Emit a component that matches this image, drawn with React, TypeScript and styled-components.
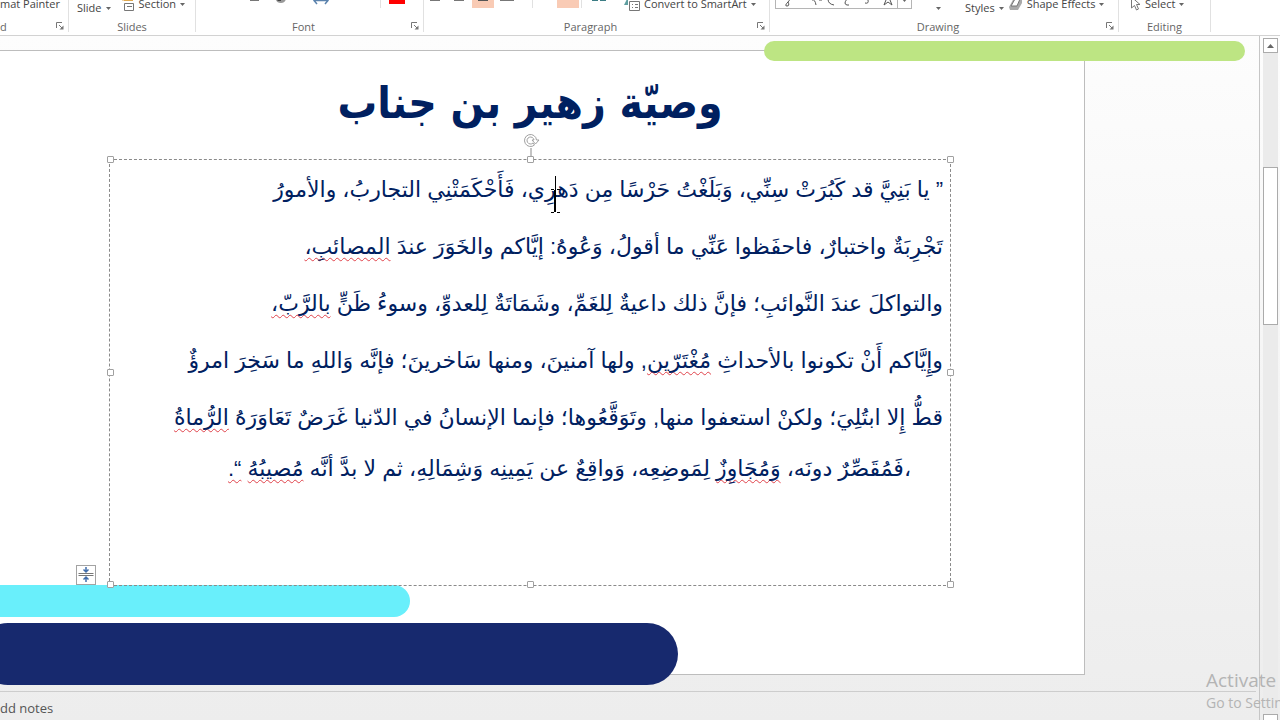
import React from "react";
import styled, { createGlobalStyle } from "styled-components";

const GlobalStyle = createGlobalStyle`
  * { box-sizing: border-box; }
  body {
    margin: 0;
    background: #ededed;
    color: #444;
    font-family: "Open Sans", "Noto Sans", sans-serif;
    font-size: 11px;
  }
`;

const Window = styled.div`
  display: flex;
  flex-direction: column;
  height: 100vh;
  min-width: 0;
  overflow: hidden;
  position: relative;
`;

const Ribbon = styled.header`
  display: flex;
  flex: none;
  height: 36px;
  background: #fff;
  border-bottom: 1px solid #d2d2d2;
  overflow: hidden;
`;

const Group = styled.section<{ $width: number }>`
  display: flex;
  flex-direction: column;
  flex: none;
  justify-content: flex-end;
  width: ${(p) => p.$width}px;
  border-right: 1px solid #e1e1e1;
  margin-bottom: 3px;
`;

const Tools = styled.div<{ $start?: number; $gap?: number }>`
  display: flex;
  align-items: flex-end;
  gap: ${(p) => p.$gap ?? 0}px;
  height: 32px;
  margin-bottom: 4px;
  padding-left: ${(p) => p.$start ?? 0}px;
`;

const GroupFooter = styled.div`
  display: flex;
  align-items: center;
  height: 12px;
  color: #666;
`;

const GroupName = styled.span<{ $align?: string }>`
  flex: 1;
  text-align: ${(p) => p.$align ?? "center"};
`;

const ToolButton = styled.button<{ $raised?: boolean; $width?: number }>`
  display: flex;
  align-items: center;
  justify-content: center;
  gap: 4px;
  width: ${(p) => (p.$width ? `${p.$width}px` : "auto")};
  height: 16px;
  margin: 0 0 ${(p) => (p.$raised ? 4 : 0)}px;
  padding: 0;
  border: 0;
  background: none;
  color: #444;
  font: inherit;
  line-height: 16px;
  white-space: nowrap;
`;

const IconButton = styled.button<{ $active?: boolean; $width: number }>`
  display: flex;
  align-items: flex-end;
  justify-content: center;
  width: ${(p) => p.$width}px;
  height: 22px;
  margin: 0 0 8px;
  padding: 0;
  border: 0;
  background: ${(p) => (p.$active ? "#f9cbb5" : "none")};
`;

const Rule = styled.span`
  width: 1px;
  height: 22px;
  margin-bottom: 8px;
  background: #e1e1e1;
`;

const Swatch = styled.span`
  width: 16px;
  height: 5px;
  margin-bottom: 4px;
  background: #f00;
`;

const Gallery = styled.div`
  display: flex;
  align-items: flex-end;
  width: 137px;
  height: 24px;
  margin-bottom: 7px;
  border: 1px solid #b5b5b5;
`;

const Body = styled.div`
  display: flex;
  flex: 1;
  min-height: 0;
  background: linear-gradient(#fdfdfd, #f6f6f6 45%, #efefef 85%, #ededed);
`;

const Main = styled.main`
  display: flex;
  flex-direction: column;
  flex: 1;
  min-width: 0;
  border-right: 1px solid #c6c6c6;
`;

const Workspace = styled.div`
  position: relative;
  flex: 1;
  padding: 14px 174px 16px 0;
`;

const Slide = styled.article`
  height: 100%;
  padding: 14px 133px 0 109px;
  background: #fff;
  border: solid #bdbdbd;
  border-width: 1px 1px 1px 0;
`;

const Pill = styled.span<{ $color: string }>`
  position: absolute;
  background: ${(p) => p.$color};
`;

const GreenPill = styled(Pill)`
  top: 5px;
  right: 14px;
  width: 481px;
  height: 20px;
  border-radius: 10px;
`;

const CyanPill = styled(Pill)`
  left: 0;
  bottom: 74px;
  width: 410px;
  height: 32px;
  border-radius: 0 16px 16px 0;
`;

const NavyPill = styled(Pill)`
  left: -23px;
  bottom: 6px;
  width: 701px;
  height: 62px;
  border-radius: 31px;
`;

const Title = styled.h1`
  margin: 0;
  height: 94px;
  color: #002060;
  font-family: "DejaVu Sans Condensed", "DejaVu Sans", sans-serif;
  font-size: 44px;
  font-weight: 700;
  line-height: 76px;
  text-align: center;
  white-space: nowrap;
`;

const TextBox = styled.div`
  position: relative;
  height: 427px;
  padding: 1px 7px 0;
  border: 1px dashed #8a8a8a;
  color: #002060;
  font-family: "Liberation Sans", "DejaVu Sans", sans-serif;
  font-size: 22px;
`;

const Line = styled.p<{ $last?: boolean }>`
  margin: 0;
  padding-right: ${(p) => (p.$last ? 32 : 0)}px;
  line-height: ${(p) => (p.$last ? 45 : 57)}px;
  white-space: nowrap;
`;

const Misspelt = styled.span`
  text-decoration: underline wavy #e0434b 1px;
  text-decoration-skip-ink: none;
  text-underline-offset: 3px;
`;

const Handle = styled.span<{ $x: number; $y: number }>`
  position: absolute;
  left: ${(p) => p.$x}%;
  top: ${(p) => p.$y}%;
  width: 7px;
  height: 7px;
  margin: -4px -3px;
  background: #fff;
  border: 1px solid #a0a0a0;
  border-radius: 1px;
`;

const Rotate = styled.svg`
  position: absolute;
  left: 50%;
  top: -28px;
  margin-left: -8px;
`;

const Pointer = styled.svg`
  position: absolute;
  left: 440px;
  top: 15px;
`;

const FitButton = styled.button`
  position: absolute;
  left: -34px;
  bottom: 0;
  width: 20px;
  height: 20px;
  padding: 0;
  background: #fff;
  border: 1px solid #a3a3a3;
`;

const Notes = styled.footer`
  flex: none;
  height: 29px;
  margin-right: 3px;
  padding-top: 6px;
  border-top: 1px solid #cdcdcd;
  color: #555;
  font-size: 13px;
  line-height: 20px;
`;

const ScrollBar = styled.aside`
  display: flex;
  flex-direction: column;
  width: 15px;
  margin: 2px 2px 0 3px;
  background: #ebebeb;
`;

const ScrollButton = styled.button`
  display: flex;
  align-items: center;
  justify-content: center;
  flex: none;
  height: 15px;
  padding: 0;
  background: #fff;
  border: 1px solid #ababab;
`;

const Track = styled.div`
  flex: 1;
  padding-top: 114px;
`;

const Thumb = styled.div`
  height: 158px;
  background: #fff;
  border: 1px solid #ababab;
`;

const ScrollEnd = styled.div`
  height: 6px;
  background: #fff;
  border: 1px solid #ababab;
  border-bottom: 0;
`;

const Watermark = styled.div`
  position: absolute;
  left: calc(100% - 74px);
  bottom: 7px;
  color: #b4b4b4;
  font-size: 14px;
  line-height: 20px;
  white-space: nowrap;
`;

const WatermarkTitle = styled.div`
  font-size: 19px;
  line-height: 26px;
`;

const LauncherIcon = styled.svg`
  margin-right: 4px;
`;

const Arrow = () => (
  <svg width="5" height="3" viewBox="0 0 5 3"><path d="M0 0h5L2.5 3z" fill="#666" /></svg>
);

const Launcher = () => (
  <LauncherIcon width="8" height="8" viewBox="0 0 8 8" fill="none" stroke="#777">
    <path d="M.5 6V.5H6M3 3l3 3" /><path d="M7.500 3.500v4h-4z" fill="#777" stroke="none" />
  </LauncherIcon>
);

const Dash = ({ width, color = "#777" }: { width: number; color?: string }) => (
  <svg width={width} height="22" viewBox={`0 0 ${width} 22`}>
    <path d={`M0 14.500h${width}`} stroke={color} />
  </svg>
);

function RibbonGroup(props: { name: string; align?: string; width: number; start?: number; gap?: number; launcher?: boolean; children: React.ReactNode }) {
  return (
    <Group $width={props.width}>
      <Tools $start={props.start} $gap={props.gap}>{props.children}</Tools>
      <GroupFooter>
        <GroupName $align={props.align}>{props.name}</GroupName>
        {props.launcher && <Launcher />}
      </GroupFooter>
    </Group>
  );
}

const handles = [[0, 0], [50, 0], [100, 0], [0, 50], [100, 50], [0, 100], [50, 100], [100, 100]];

export default function App() {
  return (
    <Window>
      <GlobalStyle />
      <Ribbon>
        <RibbonGroup name="d" align="left" width={69} launcher>
          <ToolButton $raised>mat Painter</ToolButton>
        </RibbonGroup>
        <RibbonGroup name="Slides" width={127} start={8} gap={8}>
          <ToolButton>Slide <Arrow /></ToolButton>
          <ToolButton $raised>
            <svg width="16" height="16" viewBox="0 0 16 16" fill="none">
              <path d="M1 3h4M4 0v5M5 4.500h9" stroke="#e0a84e" />
              <path d="M5.500 7.500h9v7h-9zM8 10.500h5" stroke="#777" />
            </svg>
            Section <Arrow />
          </ToolButton>
        </RibbonGroup>
        <RibbonGroup name="Font" width={228} start={47} gap={8} launcher>
          <IconButton $width={23} aria-label="Underline"><Dash width={9} /></IconButton>
          <IconButton $width={12} aria-label="Text shadow">
            <svg width="12" height="22" viewBox="0 0 12 22"><path d="M2 14h6q3 0 3-3l1 2q-1 4-5 4-4 0-5-3z" fill="#999" /><path d="M2 13h5v2H4z" fill="#444" /></svg>
          </IconButton>
          <IconButton $width={53} aria-label="Character spacing">
            <svg width="18" height="22" viewBox="0 0 18 22" fill="none" stroke="#5b83ad" strokeWidth="1.500"><path d="M2 14.500h14M5 11l-3 3.500L5 18M13 11l3 3.500L13 18" /></svg>
          </IconButton>
          <IconButton $width={17} aria-label="Change case" />
          <Rule />
          <IconButton $width={16} aria-label="Font color"><Swatch /></IconButton>
        </RibbonGroup>
        <RibbonGroup name="Paragraph" width={346} gap={2} launcher>
          <IconButton $width={22} aria-label="Align left"><Dash width={10} /></IconButton>
          <IconButton $width={22} aria-label="Center"><Dash width={10} /></IconButton>
          <IconButton $width={22} aria-label="Align right" $active><Dash width={10} color="#555" /></IconButton>
          <IconButton $width={22} aria-label="Justify"><Dash width={14} /></IconButton>
          <IconButton $width={10} aria-label="Distribute" />
          <Rule />
          <IconButton $width={20} aria-label="Left to right" />
          <IconButton $width={22} aria-label="Right to left" $active />
          <Rule />
          <IconButton $width={30} aria-label="Columns">
            <svg width="14" height="22" viewBox="0 0 14 22"><path d="M0 14h6M8 14h6" stroke="#3c7d85" strokeWidth="2" /></svg>
          </IconButton>
          <IconButton $width={6} aria-label="Column options" />
          <ToolButton $raised>
            <svg width="16" height="16" viewBox="0 0 16 16" fill="none">
              <path d="M4 1v8H0z" fill="#5f9ea0" />
              <path d="M5.500 5.500h10v9h-10zM8 8.500h1M11 8.500h3M8 11.500h1M11 11.500h3" stroke="#777" />
            </svg>
            Convert to SmartArt <Arrow />
          </ToolButton>
        </RibbonGroup>
        <RibbonGroup name="Drawing" width={349} start={5} gap={4} launcher>
          <Gallery aria-label="Shapes">
            <svg width="135" height="22" viewBox="0 0 135 22" fill="none" stroke="#555">
              <path d="M10 12q6 0 2 4t-1 4q3 0 1-4M36 14q3-1 4 5M43 14h3M52 13q0 5 6 6M71 13q-4 5 0 6h2M89 17q4 1 3-3M108 19l2-5-4-4h4l2-4 2 4h4l-4 4 2 5-4-3z" />
              <path d="M121.500 0v22" stroke="#b5b5b5" /><path d="M126 13h5l-2.500 3z" fill="#666" stroke="none" />
            </svg>
          </Gallery>
          <ToolButton aria-label="Arrange" $width={45}><Arrow /></ToolButton>
          <ToolButton>Styles <Arrow /></ToolButton>
          <ToolButton $raised>
            <svg width="15" height="14" viewBox="0 0 15 14"><path d="M1 10l5-9h8v5l-4 7H2z" fill="#aaa" /><path d="M3 9l4-7h5L9 9z" fill="#fff" stroke="#777" /></svg>
            Shape Effects <Arrow />
          </ToolButton>
        </RibbonGroup>
        <RibbonGroup name="Editing" width={92} start={10}>
          <ToolButton $raised>
            <svg width="12" height="16" viewBox="0 0 12 16"><path d="M2.500 1v11l3-2.500 2 4.500 2-1-2-4.500h3.500z" fill="#fff" stroke="#777" /></svg>
            Select <Arrow />
          </ToolButton>
        </RibbonGroup>
      </Ribbon>

      <Body>
        <Main>
          <Workspace>
            <CyanPill $color="#69effb" />
            <Slide>
              <Title dir="rtl" lang="ar">وصيّة زهير بن جناب</Title>
              <TextBox dir="rtl" lang="ar">
                <Line>” يا بَنِيَّ قد كَبُرَتْ سِنِّي، وَبَلَغْتُ حَرْسًا مِن دَهرِي، فَأَحْكَمَتْنِي التجاربُ، والأمورُ</Line>
                <Line>تَجْرِبَةٌ واختبارٌ، فاحفَظوا عَنِّي ما أقولُ، وَعُوهُ: إيَّاكم والخَوَرَ عندَ <Misspelt>المصائبِ،</Misspelt></Line>
                <Line>والتواكلَ عندَ النَّوائبِ؛ فإنَّ ذلك داعيةٌ لِلغَمِّ، وشَمَاتَةٌ لِلعدوِّ، وسوءُ ظَنٍّ <Misspelt>بالرَّبّ،</Misspelt></Line>
                <Line>وإِيَّاكم أَنْ تكونوا بالأحداثِ <Misspelt>مُغْتَرّين</Misspelt>, ولها آمنينَ، ومنها سَاخرينَ؛ فإنَّه وَاللهِ ما سَخِرَ امرؤٌ</Line>
                <Line>قطُّ إِلا ابتُلِيَ؛ ولكنْ استعفوا منها, وتَوَقَّعُوها؛ فإنما الإنسانُ في الدّنيا غَرَضٌ تَعَاوَرَهُ <Misspelt>الرُّماةُ</Misspelt></Line>
                <Line $last>،فَمُقَصِّرٌ دونَه، <Misspelt>وَمُجَاوِزٌ</Misspelt> لِمَوضِعِه، وَواقِعٌ عن يَمِينِه وَشِمَالِهِ، ثم لا بدَّ أنَّه <Misspelt>مُصيبُهُ</Misspelt> <Misspelt>“.</Misspelt></Line>
                {handles.map(([x, y]) => <Handle key={`${x}-${y}`} $x={x} $y={y} />)}
                <Rotate width="18" height="25" viewBox="0 0 18 25" fill="none">
                  <path d="M9 16v8" stroke="#888" />
                  <path d="M12.500 13A6 6 0 1 1 14.500 8h2.500l-3.500 4-3.500-4h2A3.500 3.500 0 1 0 11 11z" fill="#fff" stroke="#a0a0a0" />
                </Rotate>
                <Pointer width="10" height="40" viewBox="0 0 10 40" stroke="#000" fill="none">
                  <path d="M5.500 1v36" /><path d="M1 14.500h3M7 14.500h3M1 37.500h3M7 37.500h3M4.500 15v22" />
                </Pointer>
                <FitButton aria-label="AutoFit options">
                  <svg width="18" height="18" viewBox="0 0 18 18" stroke="#3f6cab" fill="none">
                    <path d="M1.500 7.500h15M1.500 9.500h15" stroke="#777" />
                    <path d="M9 1v5M6.500 3.500L9 6l2.500-2.500M9 16v-5M6.500 13.500L9 11l2.500 2.500" strokeWidth="1.500" />
                  </svg>
                </FitButton>
              </TextBox>
            </Slide>
            <GreenPill $color="#bde583" />
            <NavyPill $color="#17296e" />
          </Workspace>
          <Notes>dd notes</Notes>
        </Main>
        <ScrollBar aria-label="Slide scroll bar">
          <ScrollButton aria-label="Scroll up">
            <svg width="7" height="4" viewBox="0 0 7 4"><path d="M0 4h7L3.500 0z" fill="#666" /></svg>
          </ScrollButton>
          <Track><Thumb /></Track>
          <ScrollEnd />
        </ScrollBar>
      </Body>
      <Watermark>
        <WatermarkTitle>Activate</WatermarkTitle>
        Go to Settin
      </Watermark>
    </Window>
  );
}
